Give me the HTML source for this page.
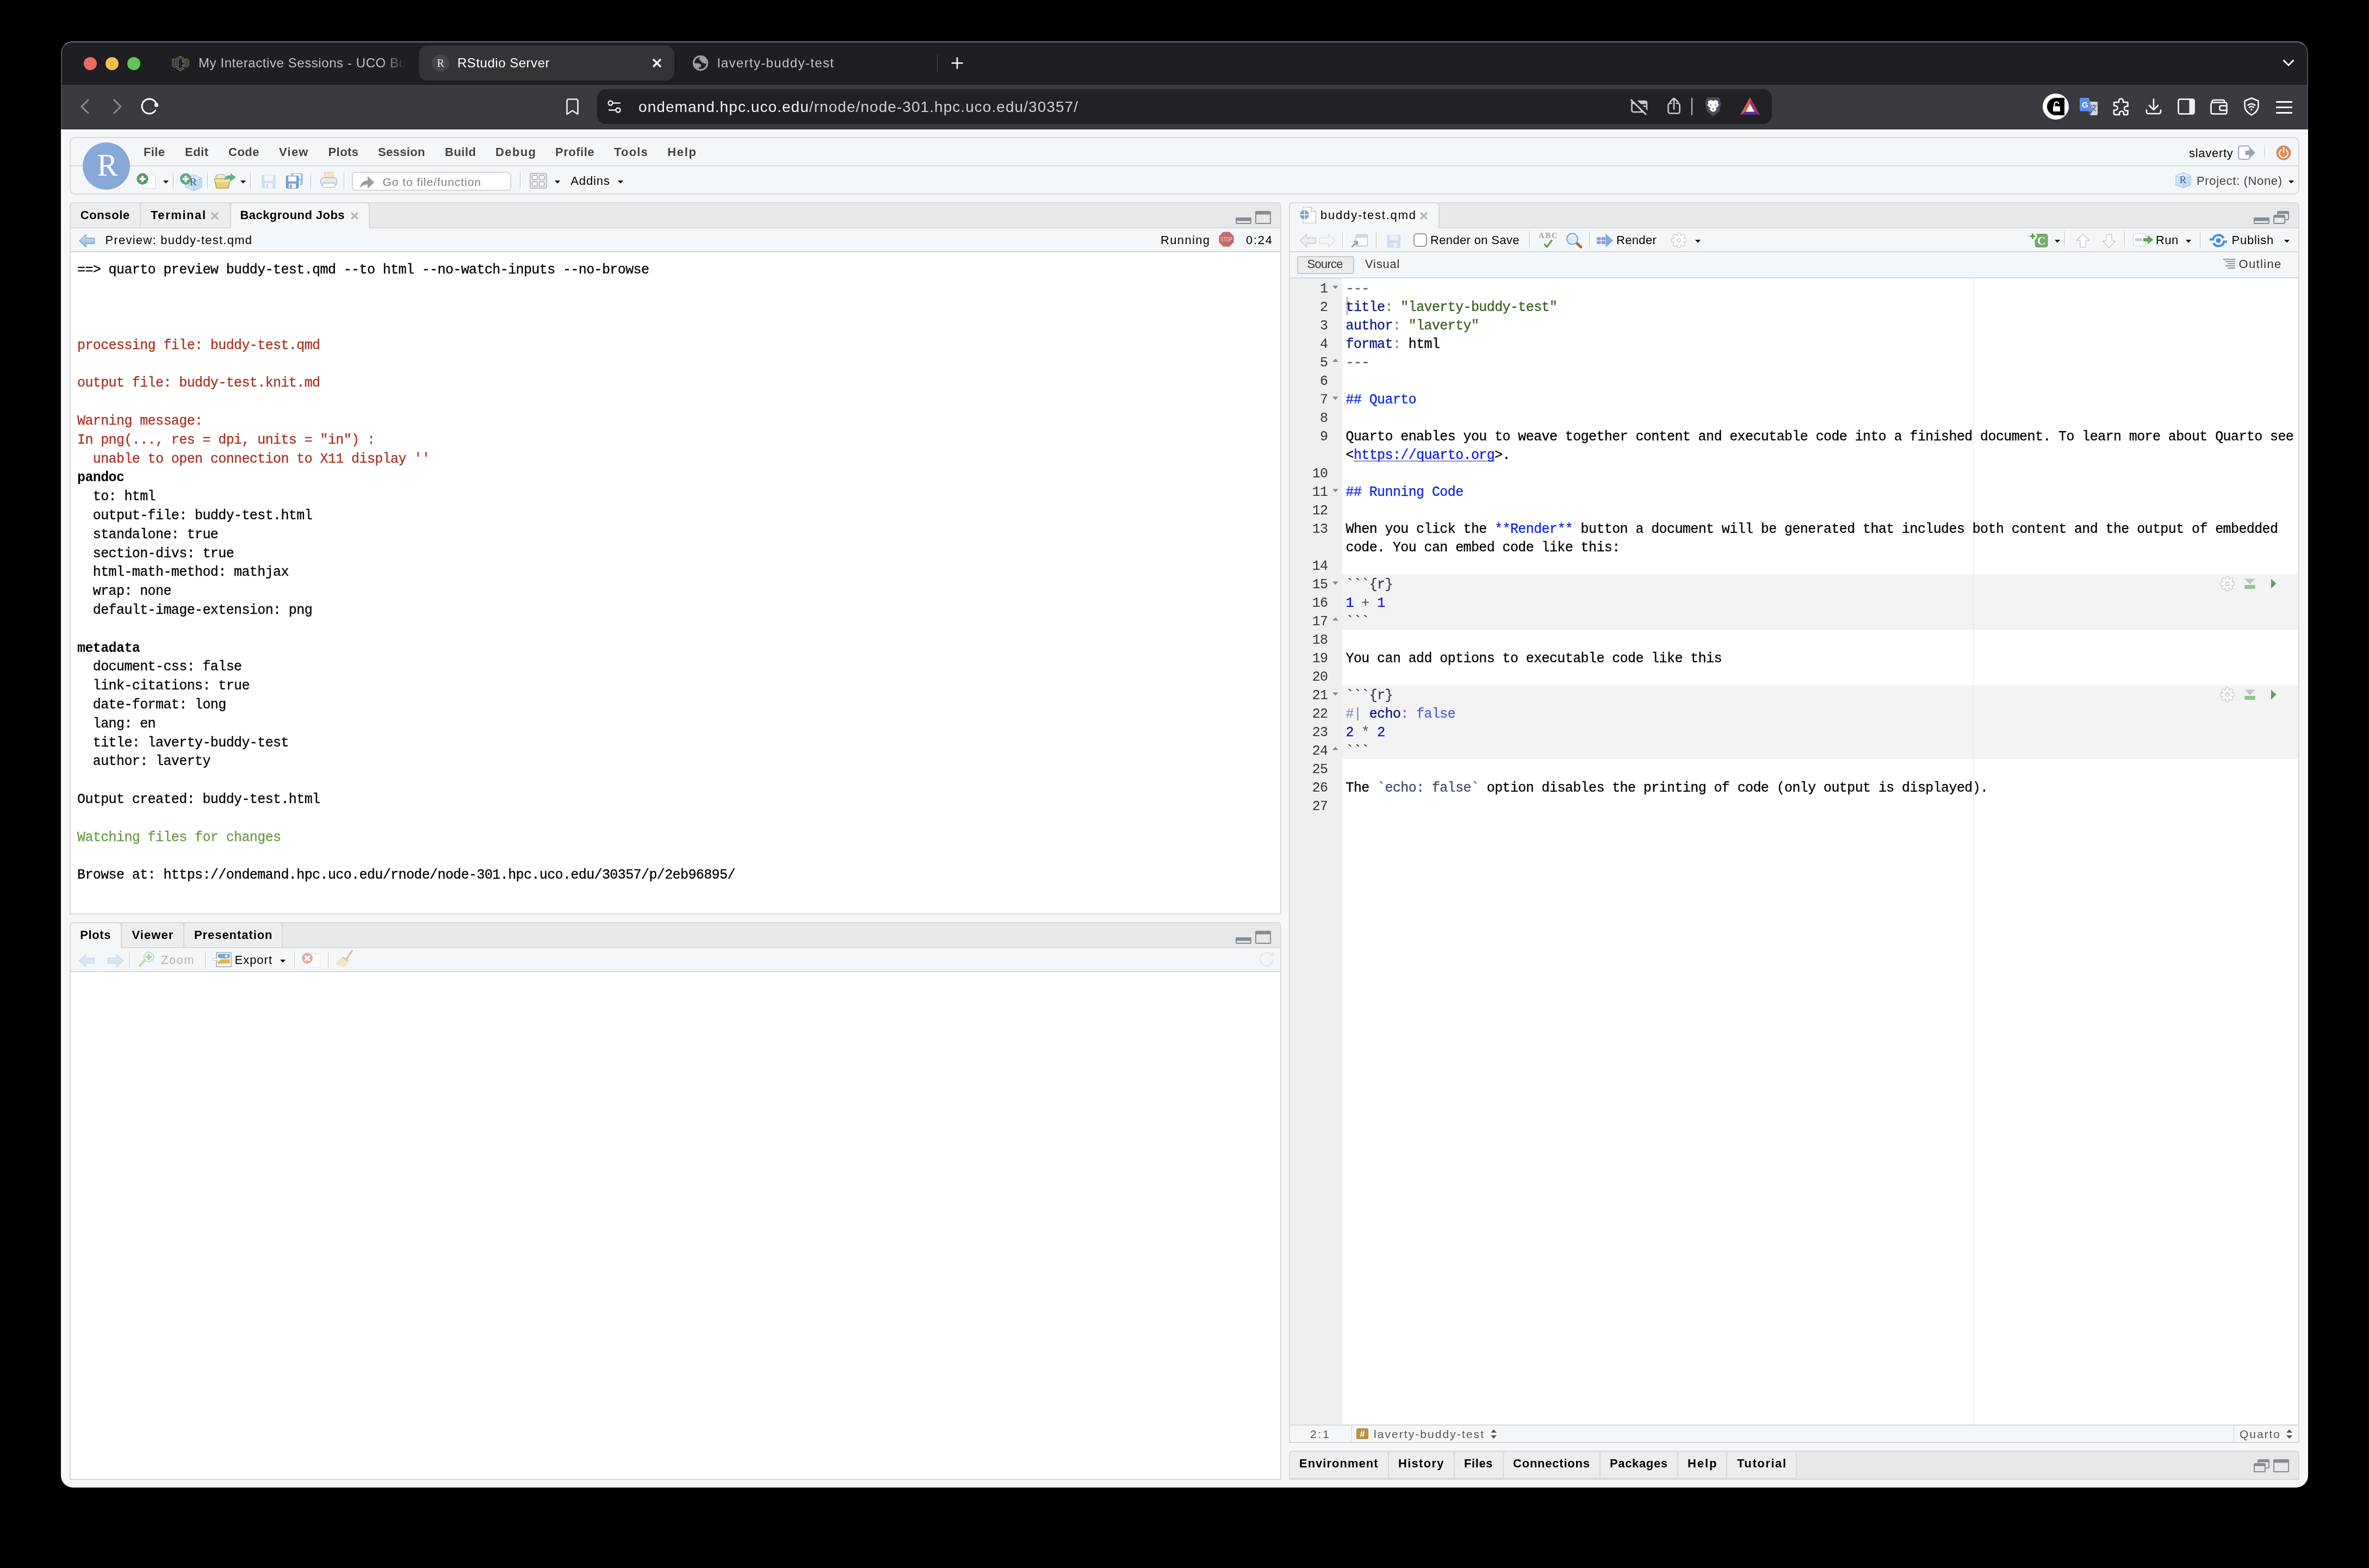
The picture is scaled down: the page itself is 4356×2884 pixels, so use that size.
<!DOCTYPE html>
<html><head><meta charset="utf-8"><title>RStudio Server</title>
<style>
html,body{margin:0;padding:0;background:#000;}
body{width:4356px;height:2884px;position:relative;overflow:hidden;font-family:"Liberation Sans",sans-serif;}
#win{position:absolute;left:0;top:0;width:4356px;height:2884px;will-change:transform;clip-path:inset(76px 112px 148px 112px round 21px 21px 22px 22px);}
#win div,#win span,#win svg{position:absolute;}
#win span{white-space:nowrap;display:block;}
#win span span{position:static;display:inline;}
#edge{position:absolute;left:112px;top:76px;width:4132px;height:162px;box-sizing:border-box;border-radius:21px 21px 0 0;border:2px solid #4b4b50;border-top-color:#6f6f73;border-bottom:none;pointer-events:none;}
</style></head><body>
<div id="win">
<div style="left:112px;top:76px;width:4132px;height:80px;background:#1f1e23"></div>
<div style="left:112px;top:156px;width:4132px;height:82px;background:#3b3a40"></div>
<div style="left:112px;top:237px;width:4132px;height:1px;background:#2a292e"></div>
<div style="left:154px;top:105px;width:24px;height:24px;border-radius:50%;background:#ec6a5e"></div>
<div style="left:194px;top:105px;width:24px;height:24px;border-radius:50%;background:#f4bf4f"></div>
<div style="left:234px;top:105px;width:24px;height:24px;border-radius:50%;background:#61c554"></div>
<svg style="left:316px;top:102px;" width="32" height="30" viewBox="0 0 32 30"><g fill="none" stroke-linejoin="miter" stroke-linecap="square">
      <g stroke="#b9a24d" stroke-width="3.600"><path d="M2.45 7.8V18.6L5.3 20.6 8.15 18.6V7.8"/><path d="M20.65 10.6V6L15.7 2.8 10.75 6V23.5L15.7 26.700 20.65 23.5V19"/><path d="M24.15 9.300 26.85 7.400 29.55 9.300V18.400L26.85 20.200 24.15 18.400z"/></g>
      <g stroke="#0b2259" stroke-width="1.900"><path d="M2.45 7.8V18.6L5.3 20.6 8.15 18.6V7.8"/><path d="M20.65 10.6V6L15.7 2.8 10.75 6V23.5L15.7 26.700 20.65 23.5V19"/><path d="M24.15 9.300 26.85 7.400 29.55 9.300V18.400L26.85 20.200 24.15 18.400z"/></g></g></svg>
<span style="left:365px;top:102px;font-size:24px;line-height:27px;color:#c2c2c6;letter-spacing:0.577px;-webkit-mask-image:linear-gradient(90deg,#000 0,#000 88%,transparent 100%);mask-image:linear-gradient(90deg,#000 0,#000 88%,transparent 100%);">My Interactive Sessions - UCO Bu</span>
<div style="left:770px;top:84px;width:470px;height:64px;background:#343338;border-radius:16px"></div>
<div style="left:794px;top:100px;width:32px;height:32px;background:#47464b;border-radius:50%"></div>
<span style="left:803.5px;top:104.5px;font-size:20px;line-height:22px;color:#f2f2f2;font-family:'Liberation Serif',serif;">R</span>
<span style="left:841px;top:102px;font-size:24px;line-height:27px;color:#fff;letter-spacing:0.519px;">RStudio Server</span>
<svg style="left:1198px;top:106px;" width="20" height="20" viewBox="0 0 20 20"><path d="M3 3 17 17M17 3 3 17" stroke="#fff" stroke-width="3.4" fill="none"/></svg>
<svg style="left:1273px;top:101px;" width="30" height="30" viewBox="0 0 30 30">
      <circle cx="15" cy="15" r="14.200" fill="#9d9fa6"/><circle cx="15" cy="15" r="11" fill="#1f1e23"/>
      <path d="M15 3.800C13 5.500 12.300 7.500 12.800 9.500L15.500 10 16.500 12.500C17 14 18.500 15 20.500 14.500 22 16.500 24.500 16.500 26.200 15A11.200 11.200 0 0 0 15 3.800z" fill="#9d9fa6"/>
      <path d="M3.800 15.200 12.500 15.500C15 16.500 16.500 18 16.200 20L15.500 22 12.200 22.800V26A11.200 11.200 0 0 1 3.800 15.200z" fill="#9d9fa6"/></svg>
<span style="left:1319px;top:102px;font-size:24px;line-height:27px;color:#c2c2c6;letter-spacing:1.368px;">laverty-buddy-test</span>
<div style="left:1722.5px;top:101px;width:1.5px;height:32px;background:#4a4950"></div>
<svg style="left:1748px;top:104px;" width="24" height="24" viewBox="0 0 24 24"><path d="M12 1.500v21M1.500 12h21" stroke="#fff" stroke-width="2.600" fill="none"/></svg>
<svg style="left:4196px;top:107px;" width="24" height="18" viewBox="0 0 24 18"><path d="M2.500 3.500 12 13l9.500-9.500" stroke="#fff" stroke-width="3" fill="none"/></svg>
<svg style="left:145px;top:180px;" width="22" height="32" viewBox="0 0 22 32"><path d="M18 3 5 16l13 13" stroke="#8b8a91" stroke-width="3" fill="none"/></svg>
<svg style="left:205px;top:180px;" width="22" height="32" viewBox="0 0 22 32"><path d="M4 3l13 13L4 29" stroke="#8b8a91" stroke-width="3" fill="none"/></svg>
<svg style="left:258px;top:178px;" width="36" height="36" viewBox="0 0 36 36"><path d="M29.500 13.500A13.500 13.500 0 1 0 27.800 25" stroke="#fff" stroke-width="3" fill="none" stroke-linecap="round"/>
      <circle cx="29.500" cy="15" r="3.700" fill="#fff"/></svg>
<svg style="left:1040px;top:180px;" width="25" height="33" viewBox="0 0 25 33"><path d="M2.500 5.500a3 3 0 0 1 3-3h14a3 3 0 0 1 3 3V30L12.500 23.500 2.500 30z" stroke="#ededf0" stroke-width="2.600" fill="none" stroke-linejoin="round"/></svg>
<div style="left:1098px;top:164px;width:2160px;height:64px;background:#222126;border-radius:16px"></div>
<svg style="left:1116px;top:183px;" width="28" height="26" viewBox="0 0 28 26"><g stroke="#ededf0" stroke-width="2.400" fill="none">
      <circle cx="6.500" cy="6.500" r="4"/><path d="M10.500 6.500H25"/>
      <circle cx="20.500" cy="19.500" r="4"/><path d="M3 19.500h13.500"/></g></svg>
<span style="left:1174px;top:180.5px;font-size:28px;line-height:31px;color:#f2f2f5;letter-spacing:1.057px;">ondemand.hpc.uco.edu<span style="color:#cfcfd4">/rnode/node-301.hpc.uco.edu/30357/</span></span>
<svg style="left:2996px;top:180px;" width="36" height="34" viewBox="0 0 36 34"><defs><mask id="cm"><rect width="36" height="34" fill="#fff"/><path d="M5 0.500 34.500 29.500" stroke="#000" stroke-width="7"/></mask></defs>
      <g mask="url(#cm)"><rect x="4.500" y="6" width="27.500" height="20" rx="3" stroke="#c9c9ce" stroke-width="2.600" fill="none"/>
      <path d="M4.500 9a3 3 0 0 1 3-3h21.500a3 3 0 0 1 3 3v2.500H4.500z" fill="#c9c9ce"/>
      <path d="M22 25V15.500h10" stroke="#c9c9ce" stroke-width="2.600" fill="none"/></g>
      <path d="M2.500 3 31 31" stroke="#c9c9ce" stroke-width="3" stroke-linecap="butt"/></svg>
<svg style="left:3065px;top:178px;" width="26" height="34" viewBox="0 0 26 34"><g stroke="#c9c9ce" stroke-width="2.600" fill="none" stroke-linejoin="round" stroke-linecap="round">
      <path d="M8.500 12H6a3.500 3.500 0 0 0-3.500 3.500v11.500A3.500 3.500 0 0 0 6 30.500h14a3.500 3.500 0 0 0 3.500-3.500V15.500A3.500 3.500 0 0 0 20 12h-2.500"/>
      <path d="M13 22.500V3M5.700 9.500 13 2.500l7.300 7"/></g></svg>
<div style="left:3109.9px;top:180px;width:2.1px;height:32px;background:#c4c4c9"></div>
<svg style="left:3133px;top:177px;" width="34" height="38" viewBox="0 0 34 38"><path d="M17 1.500 10.500 3 7.500 1.500 3.500 6l1 3L2 12.500l3.500 15L17 37l11.500-9.500 3.500-15L29.500 9l1-3-4-4.500-3 1.500z" fill="#4d4c5a"/>
      <path d="M17 8.500l-4.500-1.500-5 2.500 1 3-2 3 2 3.500 3.500 2.500-1.500 3 2.500 2.500L17 29l4-2-.0 0 2.500-2.500-1.500-3 3.500-2.500 2-3.500-2-3 1-3-5-2.500z" fill="#fff"/>
      <path d="M10 14.500l4 1.500-1 2zM24 14.500l-4 1.500 1 2zM15 22.500h4l-2 2.500z" fill="#4d4c5a"/></svg>
<svg style="left:3199px;top:178px;" width="38" height="34" viewBox="0 0 38 34"><path d="M19 1 1 33h36z" fill="#5c2d91"/>
      <path d="M19 1 1 33l18-10.500z" fill="#e2593c"/><path d="M19 1 37 33 19 22.500z" fill="#9e3568"/>
      <path d="M1 33 19 22.500 37 33z" fill="#5a2e93"/><path d="M19 13.500 11 27.500h16z" fill="#fff"/></svg>
<div style="left:3756px;top:172px;width:48px;height:48px;background:#fff;border-radius:50%"></div>
<svg style="left:3764px;top:180px;" width="32" height="32" viewBox="0 0 32 32"><path d="M16 0h16v32H16A16 16 0 0 1 16 0z" fill="#000"/>
      <rect x="11" y="15.500" width="13" height="9.500" rx="1" fill="#fff"/>
      <path d="M13.500 15.500v-3.500a4 4 0 0 1 8-.8" stroke="#fff" stroke-width="2.200" fill="none"/></svg>
<svg style="left:3823px;top:179px;" width="35" height="34" viewBox="0 0 35 34"><path d="M13 8h19a2 2 0 0 1 2 2v21a2 2 0 0 1-2 2H20z" fill="#d4d6db"/>
      <path d="M3 1h15l6.500 24.500H3a2 2 0 0 1-2-2V3a2 2 0 0 1 2-2z" fill="#5b8def"/>
      <path d="M17 25.500h7.500L20 33z" fill="#3b63c4"/>
      <text x="5" y="19" font-family="Liberation Sans, sans-serif" font-weight="bold" font-size="15" fill="#fff">G</text>
      <g stroke="#5f6b7a" stroke-width="1.700" fill="none"><path d="M22 15.500h10M27 13v2.500M30 15.500c-1 4-4 7.500-7.500 9.500M24 18.500c1.500 3 4 5.500 7 7"/></g></svg>
<svg style="left:3883px;top:179px;" width="34" height="34" viewBox="0 0 34 34"><path d="M13 6.500a4 4 0 0 1 8 0V9h6.500a2 2 0 0 1 2 2v5.500H27a4 4 0 0 0 0 8h2.500V30a2 2 0 0 1-2 2H22v-2.500a4 4 0 0 0-8 0V32H6a2 2 0 0 1-2-2v-6.500h2.500a4 4 0 0 0 0-8H4V11a2 2 0 0 1 2-2h7z" stroke="#fff" stroke-width="2.600" fill="none" stroke-linejoin="round"/></svg>
<svg style="left:3945px;top:180px;" width="30" height="32" viewBox="0 0 30 32"><g stroke="#fff" stroke-width="2.600" fill="none" stroke-linecap="round" stroke-linejoin="round">
      <path d="M15 2.500v19M7 14l8 8 8-8"/><path d="M2 22.500V26a3 3 0 0 0 3 3h20a3 3 0 0 0 3-3v-3.500"/></g></svg>
<svg style="left:4004px;top:181px;" width="32" height="30" viewBox="0 0 32 30"><rect x="1.500" y="1.500" width="29" height="27" rx="3" stroke="#fff" stroke-width="2.600" fill="none"/>
      <path d="M21.500 1.500h6a3 3 0 0 1 3 3v21a3 3 0 0 1-3 3h-6z" fill="#f0f0f3"/></svg>
<svg style="left:4064px;top:182px;" width="32" height="29" viewBox="0 0 32 29"><g stroke="#fff" stroke-width="2.600" fill="none" stroke-linejoin="round">
      <path d="M3.500 7.500V5a3 3 0 0 1 3-3h17a3 3 0 0 1 3 3v2.500"/>
      <rect x="1.500" y="6.500" width="29" height="21" rx="3"/>
      <path d="M30.500 12.500H20a2.500 2.500 0 0 0-2.500 2.500v3.500A2.500 2.500 0 0 0 20 21h10.500"/></g></svg>
<svg style="left:4125px;top:179px;" width="30" height="34" viewBox="0 0 30 34"><g stroke="#fff" stroke-width="2.500" fill="none" stroke-linejoin="round" stroke-linecap="round">
      <path d="M15 1.500 27.500 6.500v9c0 8-5.500 13.500-12.500 17C8 29 2.500 23.500 2.500 15.500v-9z"/>
      <path d="M8.500 14.500a9.500 9.500 0 0 1 13 0M11 18.500a5.800 5.800 0 0 1 8 0"/></g>
      <circle cx="15" cy="22.500" r="1.800" fill="#fff"/></svg>
<div style="left:4185px;top:186px;width:30px;height:2.6px;background:#fff;border-radius:1px"></div>
<div style="left:4185px;top:196px;width:30px;height:2.6px;background:#fff;border-radius:1px"></div>
<div style="left:4185px;top:206px;width:30px;height:2.6px;background:#fff;border-radius:1px"></div>
<div style="left:112px;top:238px;width:4132px;height:2498px;background:#f6f7f9"></div>
<div style="left:128px;top:252px;width:4100px;height:106px;box-sizing:border-box;border:2px solid #d7d9dc;border-radius:10px;background:#f4f7f9"></div>
<div style="left:130px;top:304px;width:4096px;height:2px;background:#d7d9dc"></div>
<div style="left:152px;top:261.5px;width:87px;height:87px;border-radius:50%;background:#88a8d7"></div>
<span style="left:178.5px;top:271.5px;font-size:57px;line-height:63px;color:#fff;font-family:'Liberation Serif',serif;">R</span>
<span style="left:264px;top:267px;font-size:22px;line-height:25px;color:#434343;font-weight:bold;letter-spacing:0.365px;">File</span>
<span style="left:340px;top:267px;font-size:22px;line-height:25px;color:#434343;font-weight:bold;letter-spacing:0.479px;">Edit</span>
<span style="left:420px;top:267px;font-size:22px;line-height:25px;color:#434343;font-weight:bold;letter-spacing:0.500px;">Code</span>
<span style="left:513px;top:267px;font-size:22px;line-height:25px;color:#434343;font-weight:bold;letter-spacing:1.250px;">View</span>
<span style="left:603.5px;top:267px;font-size:22px;line-height:25px;color:#434343;font-weight:bold;letter-spacing:0.426px;">Plots</span>
<span style="left:695px;top:267px;font-size:22px;line-height:25px;color:#434343;font-weight:bold;letter-spacing:0.354px;">Session</span>
<span style="left:818px;top:267px;font-size:22px;line-height:25px;color:#434343;font-weight:bold;letter-spacing:0.500px;">Build</span>
<span style="left:911px;top:267px;font-size:22px;line-height:25px;color:#434343;font-weight:bold;letter-spacing:1.387px;">Debug</span>
<span style="left:1021px;top:267px;font-size:22px;line-height:25px;color:#434343;font-weight:bold;letter-spacing:0.505px;">Profile</span>
<span style="left:1129px;top:267px;font-size:22px;line-height:25px;color:#434343;font-weight:bold;letter-spacing:1.192px;">Tools</span>
<span style="left:1227.25px;top:267px;font-size:22px;line-height:25px;color:#434343;font-weight:bold;letter-spacing:1.687px;">Help</span>
<span style="left:4025px;top:268.75px;font-size:22px;line-height:25px;color:#000;letter-spacing:0.715px;">slaverty</span>
<svg style="left:4114px;top:266px;" width="36" height="30" viewBox="0 0 36 30"><rect x="2" y="2.500" width="21" height="24.500" rx="4.500" fill="#fff" stroke="#9eaac0" stroke-width="2.200"/>
      <path d="M14.500 11h9V6l9.500 9-9.500 9v-5h-9z" fill="#94a3b8"/></svg>
<div style="left:4163.85px;top:263px;width:3.8px;height:33px;background:linear-gradient(90deg,#c3c5c8 0 37%,transparent 37% 58%,#fff 58% 100%);-webkit-mask-image:linear-gradient(180deg,transparent 0,#000 22%,#000 78%,transparent 100%);mask-image:linear-gradient(180deg,transparent 0,#000 22%,#000 78%,transparent 100%)"></div>
<svg style="left:4185px;top:267px;" width="28" height="28" viewBox="0 0 28 28"><circle cx="14" cy="14" r="13" fill="#d98e63" stroke="#c77a50" stroke-width="1"/>
      <path d="M9.500 8.500a8 8 0 1 0 9 0" stroke="#fff" stroke-width="2" fill="none" stroke-linecap="round"/>
      <path d="M14 4.500v9" stroke="#fff" stroke-width="2" stroke-linecap="round"/></svg>
<svg style="left:4000px;top:317px;" width="29" height="29" viewBox="0 0 29 29"><polygon points="14.5,0.0 29.0,6.5 14.5,13.0 0.0,6.5" fill="#dcedf8" stroke="#93c4de" stroke-width="1"/><polygon points="0.0,6.5 14.5,13.0 14.5,29.0 0.0,22.5" fill="#cfe5f4" stroke="#93c4de" stroke-width="1"/><polygon points="29.0,6.5 14.5,13.0 14.5,29.0 29.0,22.5" fill="#c3def1" stroke="#93c4de" stroke-width="1"/><path d="M14.5 13.0V29.0M0 22.5L14.5 16.0L29.0 22.5M14.5 16.0V0" stroke="#a5cfe6" stroke-width=".8" fill="none"/><text x="7.5" y="19.5" font-family="Liberation Serif, serif" font-size="19.0" fill="#3f5ba6">R</text></svg>
<span style="left:4039px;top:320px;font-size:22px;line-height:25px;color:#444;letter-spacing:0.646px;">Project: (None)</span>
<svg style="left:4208px;top:332px;" width="10" height="5.5" viewBox="0 0 10 5.5"><path d="M0 0h10L5.0 5.5z" fill="#111"/></svg>
<svg style="left:250px;top:317px;" width="38" height="32" viewBox="0 0 38 32"><rect x="12.500" y="4.500" width="23" height="25" fill="#fff" stroke="#d9dde0" stroke-width="1"/><circle cx="12" cy="12" r="10" fill="#589c67" stroke="#4a8c59" stroke-width="1"/><path d="M12 6.5v11M6.5 12h11" stroke="#fff" stroke-width="3.800"/></svg>
<svg style="left:300px;top:332px;" width="10" height="5.5" viewBox="0 0 10 5.5"><path d="M0 0h10L5.0 5.5z" fill="#111"/></svg>
<div style="left:318.1px;top:314px;width:3.8px;height:37px;background:linear-gradient(90deg,#c3c5c8 0 37%,transparent 37% 58%,#fff 58% 100%);-webkit-mask-image:linear-gradient(180deg,transparent 0,#000 22%,#000 78%,transparent 100%);mask-image:linear-gradient(180deg,transparent 0,#000 22%,#000 78%,transparent 100%)"></div>
<svg style="left:329px;top:317px;" width="44" height="36" viewBox="0 0 44 36"><g transform="translate(12,4)"><polygon points="15.0,0.0 30.0,6.7 15.0,13.4 0.0,6.7" fill="#dcedf8" stroke="#93c4de" stroke-width="1"/><polygon points="0.0,6.7 15.0,13.4 15.0,30.0 0.0,23.3" fill="#cfe5f4" stroke="#93c4de" stroke-width="1"/><polygon points="30.0,6.7 15.0,13.4 15.0,30.0 30.0,23.3" fill="#c3def1" stroke="#93c4de" stroke-width="1"/><path d="M15.0 13.4V30.0M0 23.3L15.0 16.6L30.0 23.3M15.0 16.6V0" stroke="#a5cfe6" stroke-width=".8" fill="none"/><text x="7.8" y="20.2" font-family="Liberation Serif, serif" font-size="19.7" fill="#3f5ba6">R</text></g><circle cx="12.5" cy="12" r="10" fill="#66aa86" stroke="#5a9e7a" stroke-width="1"/><path d="M12.5 6.5v11M7 12h11" stroke="#fff" stroke-width="3.800"/></svg>
<div style="left:380.6px;top:314px;width:3.8px;height:37px;background:linear-gradient(90deg,#c3c5c8 0 37%,transparent 37% 58%,#fff 58% 100%);-webkit-mask-image:linear-gradient(180deg,transparent 0,#000 22%,#000 78%,transparent 100%);mask-image:linear-gradient(180deg,transparent 0,#000 22%,#000 78%,transparent 100%)"></div>
<svg style="left:393px;top:318px;" width="44" height="30" viewBox="0 0 44 30"><path d="M4 6l3-3.500h11l3 3.500h12v6H4z" fill="#ece8d6" stroke="#bdb48f" stroke-width="1.200"/>
      <path d="M1.500 11h29l-3.500 17H5z" fill="#e8d282" stroke="#b89a3e" stroke-width="1.400" stroke-linejoin="round"/>
      <path d="M2 11.500h28l-1 5H3z" fill="#f4e8b4" opacity=".8"/>
      <path d="M19 13c1-6 6-8.500 12-8.500V.5l10 7.500-10 7.500V11c-5 0-9 .5-12 2z" fill="#64b08a"/></svg>
<svg style="left:442px;top:332px;" width="10" height="5.5" viewBox="0 0 10 5.5"><path d="M0 0h10L5.0 5.5z" fill="#111"/></svg>
<div style="left:460.1px;top:314px;width:3.8px;height:37px;background:linear-gradient(90deg,#c3c5c8 0 37%,transparent 37% 58%,#fff 58% 100%);-webkit-mask-image:linear-gradient(180deg,transparent 0,#000 22%,#000 78%,transparent 100%);mask-image:linear-gradient(180deg,transparent 0,#000 22%,#000 78%,transparent 100%)"></div>
<svg style="left:480.5px;top:321px;" width="26" height="26" viewBox="0 0 26 26"><g transform="translate(0,0) scale(1.0)"><path d="M1 3a2 2 0 0 1 2-2h20a2 2 0 0 1 2 2v20a2 2 0 0 1-2 2H3a2 2 0 0 1-2-2z" fill="#d3dfef" stroke="#c9d7ea" stroke-width="1.200"/><rect x="5" y="1.500" width="16" height="10" fill="#f3f7fb"/><rect x="6" y="16" width="14" height="9" fill="#f3f7fb"/><rect x="8" y="18" width="4" height="7" fill="#d3dfef"/></g></svg>
<svg style="left:525px;top:318px;" width="34" height="30" viewBox="0 0 34 30"><g transform="translate(10,0.5) scale(0.8461538461538461)"><path d="M1 3a2 2 0 0 1 2-2h20a2 2 0 0 1 2 2v20a2 2 0 0 1-2 2H3a2 2 0 0 1-2-2z" fill="#a3cbec" stroke="#7fb0dc" stroke-width="1.200"/><rect x="5" y="1.500" width="16" height="10" fill="#f4f9fd"/><rect x="6" y="16" width="14" height="9" fill="#f4f9fd"/><rect x="8" y="18" width="4" height="7" fill="#a3cbec"/></g><g transform="translate(0.5,5) scale(0.9230769230769231)"><path d="M1 3a2 2 0 0 1 2-2h20a2 2 0 0 1 2 2v20a2 2 0 0 1-2 2H3a2 2 0 0 1-2-2z" fill="#7b9fd4" stroke="#5f86c4" stroke-width="1.200"/><rect x="5" y="1.500" width="16" height="10" fill="#fbfcfe"/><rect x="6" y="16" width="14" height="9" fill="#fbfcfe"/><rect x="8" y="18" width="4" height="7" fill="#7b9fd4"/></g></svg>
<div style="left:570.6px;top:314px;width:3.8px;height:37px;background:linear-gradient(90deg,#c3c5c8 0 37%,transparent 37% 58%,#fff 58% 100%);-webkit-mask-image:linear-gradient(180deg,transparent 0,#000 22%,#000 78%,transparent 100%);mask-image:linear-gradient(180deg,transparent 0,#000 22%,#000 78%,transparent 100%)"></div>
<svg style="left:588px;top:316px;" width="33" height="31" viewBox="0 0 33 31"><rect x="8.500" y="1" width="16" height="14" fill="#f0e4c2" stroke="#dccfa6" stroke-width="1"/>
      <rect x="1.500" y="11" width="30" height="14" rx="5" fill="#e9ecf0" stroke="#aeb6c2" stroke-width="1.300"/>
      <rect x="5" y="21" width="23" height="7.500" rx="2" fill="#f8f9fa" stroke="#aeb6c2" stroke-width="1.200"/>
      <path d="M3 19.500h27" stroke="#c6ccd5" stroke-width="1.200"/></svg>
<div style="left:632.1px;top:314px;width:3.8px;height:37px;background:linear-gradient(90deg,#c3c5c8 0 37%,transparent 37% 58%,#fff 58% 100%);-webkit-mask-image:linear-gradient(180deg,transparent 0,#000 22%,#000 78%,transparent 100%);mask-image:linear-gradient(180deg,transparent 0,#000 22%,#000 78%,transparent 100%)"></div>
<div style="left:646.5px;top:315.5px;width:293px;height:35px;box-sizing:border-box;background:#fff;border:2px solid #d3d7da;border-radius:7px"></div>
<svg style="left:661px;top:321px;" width="28" height="26" viewBox="0 0 28 26"><path d="M1 25c1-9 6-14 14-14V3l12 11.500L15 26v-7.500C9 18.500 4 20.500 1 25z" fill="#9b9ba3"/></svg>
<span style="left:703.5px;top:323px;font-size:21px;line-height:23px;color:#7d7d7d;letter-spacing:0.948px;">Go to file/function</span>
<div style="left:956.1px;top:314px;width:3.8px;height:37px;background:linear-gradient(90deg,#c3c5c8 0 37%,transparent 37% 58%,#fff 58% 100%);-webkit-mask-image:linear-gradient(180deg,transparent 0,#000 22%,#000 78%,transparent 100%);mask-image:linear-gradient(180deg,transparent 0,#000 22%,#000 78%,transparent 100%)"></div>
<svg style="left:974px;top:318px;" width="32" height="29" viewBox="0 0 32 29"><rect x="1" y="1" width="30" height="27" rx="3" fill="#eceef2" stroke="#a9adb8" stroke-width="1.400"/>
      <g fill="#f9fafb" stroke="#a9adb8" stroke-width="1.400"><rect x="4.500" y="4.500" width="9.500" height="8" rx="1.500"/><rect x="17.500" y="4.500" width="9.500" height="8" rx="1.500"/>
      <rect x="4.500" y="16.500" width="9.500" height="8" rx="1.500"/><rect x="17.500" y="16.500" width="9.500" height="8" rx="1.500"/></g></svg>
<svg style="left:1020px;top:332px;" width="10" height="5.5" viewBox="0 0 10 5.5"><path d="M0 0h10L5.0 5.5z" fill="#111"/></svg>
<span style="left:1049.25px;top:319.5px;font-size:22px;line-height:25px;color:#000;letter-spacing:0.894px;">Addins</span>
<svg style="left:1136px;top:332px;" width="10" height="5.5" viewBox="0 0 10 5.5"><path d="M0 0h10L5.0 5.5z" fill="#111"/></svg>
<div style="left:128px;top:372px;width:2228px;height:1310px;box-sizing:border-box;border:2px solid #d7d9dc;border-radius:7px 7px 0 0;background:#fff;overflow:hidden"></div>
<div style="left:130px;top:374px;width:2224px;height:44px;background:#e7e8ea;border-radius:5px 5px 0 0"></div>
<div style="left:130px;top:418px;width:2224px;height:2px;background:#d7d9dc"></div>
<div style="left:128px;top:372px;width:131px;height:48px;box-sizing:border-box;background:#ecedef;border:2px solid #d7d9dc;border-radius:7px 7px 0 0"></div>
<div style="left:257px;top:372px;width:168px;height:48px;box-sizing:border-box;background:#ecedef;border:2px solid #d7d9dc;border-radius:7px 7px 0 0"></div>
<div style="left:423px;top:372px;width:257px;height:49px;box-sizing:border-box;background:#f4f7f9;border:2px solid #d7d9dc;border-bottom:none;border-radius:7px 7px 0 0"></div>
<span style="left:147.75px;top:383px;font-size:22px;line-height:25px;color:#000;font-weight:bold;letter-spacing:0.617px;">Console</span>
<span style="left:277px;top:383px;font-size:22px;line-height:25px;color:#000;font-weight:bold;letter-spacing:1.562px;">Terminal</span>
<svg style="left:388.0px;top:389.5px;" width="14" height="14" viewBox="0 0 14 14"><path d="M1 1 13 13M13 1 1 13" stroke="#b3b3b3" stroke-width="3.200" fill="none"/></svg>
<span style="left:441.5px;top:383px;font-size:22px;line-height:25px;color:#000;font-weight:bold;letter-spacing:0.442px;">Background Jobs</span>
<svg style="left:644.5px;top:389.5px;" width="14" height="14" viewBox="0 0 14 14"><path d="M1 1 13 13M13 1 1 13" stroke="#b3b3b3" stroke-width="3.200" fill="none"/></svg>
<svg style="left:2272px;top:400px;" width="29" height="12" viewBox="0 0 29 12"><rect x="1" y="1" width="27" height="10" rx="1" fill="none" stroke="#858d93" stroke-width="2"/><rect x="1" y="1" width="27" height="5.500" rx="1" fill="#858d93"/></svg>
<svg style="left:2308px;top:388px;" width="29" height="24" viewBox="0 0 29 24"><rect x="1" y="1" width="27" height="22" rx="1" fill="none" stroke="#858d93" stroke-width="2"/><rect x="1" y="1" width="27" height="5.500" rx="1" fill="#858d93"/></svg>
<div style="left:130px;top:420px;width:2224px;height:42px;background:#f4f7f9"></div>
<div style="left:130px;top:462px;width:2224px;height:2px;background:#d7d9dc"></div>
<svg style="left:145px;top:430px;" width="30" height="26" viewBox="0 0 30 26"><defs><linearGradient id="ba" x1="0" y1="0" x2="0" y2="1"><stop offset="0" stop-color="#cfe2f3"/><stop offset="1" stop-color="#8fb6dc"/></linearGradient></defs>
      <path d="M1 13 13 1.500v6.500h15.500v10H13v6.500z" fill="url(#ba)" stroke="#7aa3cc" stroke-width="1.300" stroke-linejoin="round"/></svg>
<span style="left:193.5px;top:428.75px;font-size:22px;line-height:25px;color:#000;letter-spacing:1.245px;">Preview: buddy-test.qmd</span>
<span style="left:2134px;top:428.75px;font-size:22px;line-height:25px;color:#000;letter-spacing:1.341px;">Running</span>
<svg style="left:2241px;top:426px;" width="28" height="28" viewBox="0 0 28 28"><path d="M8.500 1h11l7.500 7.500v11L19.500 27h-11L1 19.500v-11z" fill="#c8676a" stroke="#b45558" stroke-width="1"/>
      <text x="14" y="18" text-anchor="middle" font-family="Liberation Sans, sans-serif" font-size="11" fill="#f3d6d6" textLength="22" lengthAdjust="spacingAndGlyphs">STOP</text></svg>
<span style="left:2291px;top:428.75px;font-size:22px;line-height:25px;color:#000;letter-spacing:1.724px;">0:24</span>
<span style="left:142px;top:481.5px;font-size:25px;line-height:29px;color:#000;font-family:'Liberation Mono',monospace;white-space:pre;letter-spacing:-.6px;-webkit-text-stroke:.3px;">==&gt; quarto preview buddy-test.qmd --to html --no-watch-inputs --no-browse</span>
<span style="left:142px;top:620.7px;font-size:25px;line-height:29px;color:#aa3223;font-family:'Liberation Mono',monospace;white-space:pre;letter-spacing:-.6px;-webkit-text-stroke:.3px;">processing file: buddy-test.qmd</span>
<span style="left:142px;top:690.3px;font-size:25px;line-height:29px;color:#aa3223;font-family:'Liberation Mono',monospace;white-space:pre;letter-spacing:-.6px;-webkit-text-stroke:.3px;">output file: buddy-test.knit.md</span>
<span style="left:142px;top:759.9px;font-size:25px;line-height:29px;color:#aa3223;font-family:'Liberation Mono',monospace;white-space:pre;letter-spacing:-.6px;-webkit-text-stroke:.3px;">Warning message:</span>
<span style="left:142px;top:794.7px;font-size:25px;line-height:29px;color:#aa3223;font-family:'Liberation Mono',monospace;white-space:pre;letter-spacing:-.6px;-webkit-text-stroke:.3px;">In png(..., res = dpi, units = &quot;in&quot;) :</span>
<span style="left:142px;top:829.5px;font-size:25px;line-height:29px;color:#aa3223;font-family:'Liberation Mono',monospace;white-space:pre;letter-spacing:-.6px;-webkit-text-stroke:.3px;">  unable to open connection to X11 display &#x27;&#x27;</span>
<span style="left:142px;top:864.3px;font-size:25px;line-height:29px;color:#000;font-weight:bold;font-family:'Liberation Mono',monospace;white-space:pre;letter-spacing:-.6px;">pandoc</span>
<span style="left:142px;top:899.1px;font-size:25px;line-height:29px;color:#000;font-family:'Liberation Mono',monospace;white-space:pre;letter-spacing:-.6px;-webkit-text-stroke:.3px;">  to: html</span>
<span style="left:142px;top:933.9px;font-size:25px;line-height:29px;color:#000;font-family:'Liberation Mono',monospace;white-space:pre;letter-spacing:-.6px;-webkit-text-stroke:.3px;">  output-file: buddy-test.html</span>
<span style="left:142px;top:968.7px;font-size:25px;line-height:29px;color:#000;font-family:'Liberation Mono',monospace;white-space:pre;letter-spacing:-.6px;-webkit-text-stroke:.3px;">  standalone: true</span>
<span style="left:142px;top:1003.5px;font-size:25px;line-height:29px;color:#000;font-family:'Liberation Mono',monospace;white-space:pre;letter-spacing:-.6px;-webkit-text-stroke:.3px;">  section-divs: true</span>
<span style="left:142px;top:1038.3px;font-size:25px;line-height:29px;color:#000;font-family:'Liberation Mono',monospace;white-space:pre;letter-spacing:-.6px;-webkit-text-stroke:.3px;">  html-math-method: mathjax</span>
<span style="left:142px;top:1073.1px;font-size:25px;line-height:29px;color:#000;font-family:'Liberation Mono',monospace;white-space:pre;letter-spacing:-.6px;-webkit-text-stroke:.3px;">  wrap: none</span>
<span style="left:142px;top:1107.9px;font-size:25px;line-height:29px;color:#000;font-family:'Liberation Mono',monospace;white-space:pre;letter-spacing:-.6px;-webkit-text-stroke:.3px;">  default-image-extension: png</span>
<span style="left:142px;top:1177.5px;font-size:25px;line-height:29px;color:#000;font-weight:bold;font-family:'Liberation Mono',monospace;white-space:pre;letter-spacing:-.6px;">metadata</span>
<span style="left:142px;top:1212.3px;font-size:25px;line-height:29px;color:#000;font-family:'Liberation Mono',monospace;white-space:pre;letter-spacing:-.6px;-webkit-text-stroke:.3px;">  document-css: false</span>
<span style="left:142px;top:1247.1px;font-size:25px;line-height:29px;color:#000;font-family:'Liberation Mono',monospace;white-space:pre;letter-spacing:-.6px;-webkit-text-stroke:.3px;">  link-citations: true</span>
<span style="left:142px;top:1281.9px;font-size:25px;line-height:29px;color:#000;font-family:'Liberation Mono',monospace;white-space:pre;letter-spacing:-.6px;-webkit-text-stroke:.3px;">  date-format: long</span>
<span style="left:142px;top:1316.7px;font-size:25px;line-height:29px;color:#000;font-family:'Liberation Mono',monospace;white-space:pre;letter-spacing:-.6px;-webkit-text-stroke:.3px;">  lang: en</span>
<span style="left:142px;top:1351.5px;font-size:25px;line-height:29px;color:#000;font-family:'Liberation Mono',monospace;white-space:pre;letter-spacing:-.6px;-webkit-text-stroke:.3px;">  title: laverty-buddy-test</span>
<span style="left:142px;top:1386.3px;font-size:25px;line-height:29px;color:#000;font-family:'Liberation Mono',monospace;white-space:pre;letter-spacing:-.6px;-webkit-text-stroke:.3px;">  author: laverty</span>
<span style="left:142px;top:1455.9px;font-size:25px;line-height:29px;color:#000;font-family:'Liberation Mono',monospace;white-space:pre;letter-spacing:-.6px;-webkit-text-stroke:.3px;">Output created: buddy-test.html</span>
<span style="left:142px;top:1525.5px;font-size:25px;line-height:29px;color:#6a9b45;font-family:'Liberation Mono',monospace;white-space:pre;letter-spacing:-.6px;-webkit-text-stroke:.3px;">Watching files for changes</span>
<span style="left:142px;top:1595.1px;font-size:25px;line-height:29px;color:#000;font-family:'Liberation Mono',monospace;white-space:pre;letter-spacing:-.6px;-webkit-text-stroke:.3px;">Browse at: https://ondemand.hpc.uco.edu/rnode/node-301.hpc.uco.edu/30357/p/2eb96895/</span>
<div style="left:128px;top:1696px;width:2228px;height:1026px;box-sizing:border-box;border:2px solid #d7d9dc;border-radius:7px 7px 0 0;background:#fff;overflow:hidden"></div>
<div style="left:130px;top:1698px;width:2224px;height:44px;background:#e7e8ea;border-radius:5px 5px 0 0"></div>
<div style="left:130px;top:1742px;width:2224px;height:2px;background:#d7d9dc"></div>
<div style="left:128px;top:1696px;width:96px;height:49px;box-sizing:border-box;background:#f4f7f9;border:2px solid #d7d9dc;border-bottom:none;border-radius:7px 7px 0 0"></div>
<div style="left:222px;top:1696px;width:117px;height:48px;box-sizing:border-box;background:#ecedef;border:2px solid #d7d9dc;border-radius:7px 7px 0 0"></div>
<div style="left:337px;top:1696px;width:183px;height:48px;box-sizing:border-box;background:#ecedef;border:2px solid #d7d9dc;border-radius:7px 7px 0 0"></div>
<span style="left:147.25px;top:1707px;font-size:22px;line-height:25px;color:#000;font-weight:bold;letter-spacing:0.613px;">Plots</span>
<span style="left:242.5px;top:1707px;font-size:22px;line-height:25px;color:#000;font-weight:bold;letter-spacing:1.041px;">Viewer</span>
<span style="left:357px;top:1707px;font-size:22px;line-height:25px;color:#000;font-weight:bold;letter-spacing:0.930px;">Presentation</span>
<svg style="left:2272px;top:1724px;" width="29" height="12" viewBox="0 0 29 12"><rect x="1" y="1" width="27" height="10" rx="1" fill="none" stroke="#858d93" stroke-width="2"/><rect x="1" y="1" width="27" height="5.500" rx="1" fill="#858d93"/></svg>
<svg style="left:2308px;top:1712px;" width="29" height="24" viewBox="0 0 29 24"><rect x="1" y="1" width="27" height="22" rx="1" fill="none" stroke="#858d93" stroke-width="2"/><rect x="1" y="1" width="27" height="5.500" rx="1" fill="#858d93"/></svg>
<div style="left:130px;top:1744px;width:2224px;height:42px;background:#f4f7f9"></div>
<div style="left:130px;top:1786px;width:2224px;height:2px;background:#d7d9dc"></div>
<svg style="left:144px;top:1754px;" width="32" height="26" viewBox="0 0 32 26"><path d="M1.500 13 13.500 1.500v6.500h16v10h-16v6.500z" fill="#d6e6f2" stroke="#c3d9ea" stroke-width="1.200" stroke-linejoin="round"/></svg>
<svg style="left:196px;top:1754px;" width="32" height="26" viewBox="0 0 32 26"><path d="M30.500 13 18.500 1.500v6.500h-16v10h16v6.500z" fill="#d6e6f2" stroke="#c3d9ea" stroke-width="1.200" stroke-linejoin="round"/></svg>
<div style="left:238.1px;top:1747px;width:3.8px;height:37px;background:linear-gradient(90deg,#c3c5c8 0 37%,transparent 37% 58%,#fff 58% 100%);-webkit-mask-image:linear-gradient(180deg,transparent 0,#000 22%,#000 78%,transparent 100%);mask-image:linear-gradient(180deg,transparent 0,#000 22%,#000 78%,transparent 100%)"></div>
<svg style="left:255px;top:1749px;" width="30" height="30" viewBox="0 0 30 30"><path d="M2 27 12 17" stroke="#dccbb4" stroke-width="4.500" stroke-linecap="round"/>
      <circle cx="18.500" cy="11" r="9" fill="#eef6f1" stroke="#c9d6d2" stroke-width="2"/>
      <path d="M18.500 5.500v11M13 11h11" stroke="#a9d3b3" stroke-width="3.400"/></svg>
<span style="left:296px;top:1752.5px;font-size:22px;line-height:25px;color:#b4b4b4;letter-spacing:1.417px;">Zoom</span>
<div style="left:376.6px;top:1747px;width:3.8px;height:37px;background:linear-gradient(90deg,#c3c5c8 0 37%,transparent 37% 58%,#fff 58% 100%);-webkit-mask-image:linear-gradient(180deg,transparent 0,#000 22%,#000 78%,transparent 100%);mask-image:linear-gradient(180deg,transparent 0,#000 22%,#000 78%,transparent 100%)"></div>
<svg style="left:390px;top:1751px;" width="36" height="28" viewBox="0 0 36 28"><rect x="8" y="1" width="27" height="26" fill="#fff" stroke="#8d949e" stroke-width="1.200"/>
      <rect x="10.500" y="3.500" width="22" height="10" fill="#6aa6e0"/><rect x="10.500" y="13" width="22" height="8.500" fill="#e0b64a"/>
      <path d="M10.500 12c6-3 12 2 22-2v4h-22z" fill="#f3e6b0"/><circle cx="26" cy="7.500" r="2.500" fill="#fff" opacity=".9"/>
      <path d="M1 11.500h9v-3.500l6 5.500-6 5.500v-3.500H1z" fill="#fff" stroke="#b9bec6" stroke-width=".8"/></svg>
<span style="left:431.5px;top:1752.5px;font-size:22px;line-height:25px;color:#000;letter-spacing:0.981px;">Export</span>
<svg style="left:514.5px;top:1765px;" width="10" height="5.5" viewBox="0 0 10 5.5"><path d="M0 0h10L5.0 5.5z" fill="#111"/></svg>
<div style="left:541.1px;top:1747px;width:3.8px;height:37px;background:linear-gradient(90deg,#c3c5c8 0 37%,transparent 37% 58%,#fff 58% 100%);-webkit-mask-image:linear-gradient(180deg,transparent 0,#000 22%,#000 78%,transparent 100%);mask-image:linear-gradient(180deg,transparent 0,#000 22%,#000 78%,transparent 100%)"></div>
<svg style="left:554px;top:1751px;" width="36" height="30" viewBox="0 0 36 30"><rect x="12" y="3.500" width="23" height="24.500" fill="#fdfdfd" stroke="#e4e6e9" stroke-width="1"/>
      <circle cx="11" cy="11.500" r="10" fill="#e3aaa6"/><path d="M6.500 7l9 9M15.500 7l-9 9" stroke="#fff" stroke-width="3.400"/></svg>
<div style="left:603.1px;top:1747px;width:3.8px;height:37px;background:linear-gradient(90deg,#c3c5c8 0 37%,transparent 37% 58%,#fff 58% 100%);-webkit-mask-image:linear-gradient(180deg,transparent 0,#000 22%,#000 78%,transparent 100%);mask-image:linear-gradient(180deg,transparent 0,#000 22%,#000 78%,transparent 100%)"></div>
<svg style="left:617px;top:1747px;" width="34" height="33" viewBox="0 0 34 33"><path d="M18 20 30 2" stroke="#e6b9b4" stroke-width="3.500" stroke-linecap="round"/>
      <path d="M11 14.500l12 8-7 8.500-15-5.500z" fill="#efe6c4" stroke="#e6dcb4" stroke-width="1"/>
      <path d="M13 13.500l10.500 7" stroke="#e0c9a0" stroke-width="3"/></svg>
<svg style="left:2314px;top:1749px;" width="30" height="30" viewBox="0 0 30 30"><path d="M24 7.500A12 12 0 1 0 27 15" stroke="#e3e6e9" stroke-width="2.200" fill="none"/><path d="M20 8.500h7v-7" stroke="#e3e6e9" stroke-width="2.200" fill="none"/></svg>
<div style="left:2370px;top:372px;width:1858px;height:2282px;box-sizing:border-box;border:2px solid #d7d9dc;border-radius:7px 7px 0 0;background:#fff;overflow:hidden"></div>
<div style="left:2372px;top:374px;width:1854px;height:44px;background:#e7e8ea;border-radius:5px 5px 0 0"></div>
<div style="left:2372px;top:418px;width:1854px;height:2px;background:#d7d9dc"></div>
<div style="left:2370px;top:372px;width:277px;height:49px;box-sizing:border-box;background:#f4f7f9;border:2px solid #d7d9dc;border-bottom:none;border-radius:7px 7px 0 0"></div>
<svg style="left:2389px;top:380px;" width="32" height="31" viewBox="0 0 32 31"><path d="M7 1h15l8.500 8.500V30H7z" fill="#fff" stroke="#b9bdc4" stroke-width="1.200"/>
      <path d="M22 1v8.500h8.500" fill="#eef0f3" stroke="#b9bdc4" stroke-width="1.200"/>
      <circle cx="9.500" cy="15" r="8.500" fill="#7f9fd6"/><path d="M9.500 6.500v17M1 15h17" stroke="#fff" stroke-width="1.600"/></svg>
<span style="left:2428px;top:383px;font-size:22px;line-height:25px;color:#000;letter-spacing:1.797px;">buddy-test.qmd</span>
<svg style="left:2611.0px;top:390.0px;" width="14" height="14" viewBox="0 0 14 14"><path d="M1 1 13 13M13 1 1 13" stroke="#b3b3b3" stroke-width="3.200" fill="none"/></svg>
<svg style="left:4144px;top:400px;" width="29" height="12" viewBox="0 0 29 12"><rect x="1" y="1" width="27" height="10" rx="1" fill="none" stroke="#858d93" stroke-width="2"/><rect x="1" y="1" width="27" height="5.500" rx="1" fill="#858d93"/></svg>
<svg style="left:4180px;top:387.5px;" width="29" height="24" viewBox="0 0 29 24"><path d="M8 8V3a2 2 0 0 1 2-2h16a2 2 0 0 1 2 2v11a2 2 0 0 1-2 2h-5" fill="none" stroke="#858d93" stroke-width="2"/><path d="M8 5.500V3a2 2 0 0 1 2-2h16a2 2 0 0 1 2 2v2.500z" fill="#858d93"/>
       <rect x="1" y="8" width="20" height="15" rx="2" fill="#e7e8ea" stroke="#858d93" stroke-width="2"/><path d="M1 12.500V10a2 2 0 0 1 2-2h16a2 2 0 0 1 2 2v2.500z" fill="#858d93"/></svg>
<div style="left:2372px;top:420px;width:1854px;height:42px;background:#f4f7f9"></div>
<div style="left:2372px;top:462px;width:1854px;height:2px;background:#d7d9dc"></div>
<svg style="left:2389px;top:429px;" width="32" height="27" viewBox="0 0 32 27"><path d="M1.500 13.500 13.500 1.500v7h16.500v10H13.500v7z" fill="#eeeeef" stroke="#c4c6c9" stroke-width="1.300" stroke-linejoin="round"/></svg>
<svg style="left:2424px;top:429px;" width="32" height="27" viewBox="0 0 32 27"><path d="M30.500 13.500 18.500 1.500v7H2v10h16.500v7z" fill="#f6f7f8" stroke="#dcdee0" stroke-width="1.300" stroke-linejoin="round"/></svg>
<div style="left:2468.1px;top:422px;width:3.8px;height:37px;background:linear-gradient(90deg,#c3c5c8 0 37%,transparent 37% 58%,#fff 58% 100%);-webkit-mask-image:linear-gradient(180deg,transparent 0,#000 22%,#000 78%,transparent 100%);mask-image:linear-gradient(180deg,transparent 0,#000 22%,#000 78%,transparent 100%)"></div>
<svg style="left:2484px;top:430px;" width="32" height="26" viewBox="0 0 32 26"><rect x="9" y="1.500" width="21.500" height="21" rx="3" fill="#fdfdfe" stroke="#b9bfc8" stroke-width="1.300"/>
      <path d="M9 7.500V4.500a3 3 0 0 1 3-3h15.500a3 3 0 0 1 3 3v3z" fill="#c7dcf2"/>
      <path d="M1.500 24.500 11 15M5.500 14.500H11.500V20.500" stroke="#9aa3b0" stroke-width="3" fill="none"/></svg>
<div style="left:2530.1px;top:422px;width:3.8px;height:37px;background:linear-gradient(90deg,#c3c5c8 0 37%,transparent 37% 58%,#fff 58% 100%);-webkit-mask-image:linear-gradient(180deg,transparent 0,#000 22%,#000 78%,transparent 100%);mask-image:linear-gradient(180deg,transparent 0,#000 22%,#000 78%,transparent 100%)"></div>
<svg style="left:2550px;top:430.5px;" width="25.5" height="25.5" viewBox="0 0 25.5 25.5"><g transform="translate(0,0) scale(0.9807692307692307)"><path d="M1 3a2 2 0 0 1 2-2h20a2 2 0 0 1 2 2v20a2 2 0 0 1-2 2H3a2 2 0 0 1-2-2z" fill="#cfdcee" stroke="#d5e0ef" stroke-width="1.200"/><rect x="5" y="1.500" width="16" height="10" fill="#e9eff7"/><rect x="6" y="16" width="14" height="9" fill="#e9eff7"/><rect x="8" y="18" width="4" height="7" fill="#cfdcee"/></g></svg>
<div style="left:2598.5px;top:428.5px;width:25px;height:25px;box-sizing:border-box;background:#fff;border:2px solid #9a9a9a;border-radius:6px"></div>
<span style="left:2630px;top:428.75px;font-size:22px;line-height:25px;color:#000;letter-spacing:0.346px;">Render on Save</span>
<div style="left:2812.1px;top:422px;width:3.8px;height:37px;background:linear-gradient(90deg,#c3c5c8 0 37%,transparent 37% 58%,#fff 58% 100%);-webkit-mask-image:linear-gradient(180deg,transparent 0,#000 22%,#000 78%,transparent 100%);mask-image:linear-gradient(180deg,transparent 0,#000 22%,#000 78%,transparent 100%)"></div>
<span style="left:2829px;top:425px;font-size:14.5px;line-height:16px;color:#a9a9a9;font-weight:bold;font-family:'Liberation Serif',serif;letter-spacing:1.938px;">ABC</span>
<svg style="left:2838px;top:440px;" width="18" height="16" viewBox="0 0 18 16"><path d="M1.500 8.500 6.500 14 16 1.500" stroke="#5aa13e" stroke-width="3" fill="none"/></svg>
<svg style="left:2879px;top:428px;" width="31" height="29" viewBox="0 0 31 29"><path d="M19 18 28 26.500" stroke="#a0672c" stroke-width="4.500" stroke-linecap="round"/>
      <circle cx="12" cy="11.500" r="10" fill="#d9ecf9" stroke="#8fa6bf" stroke-width="2"/><path d="M6 9a6.500 6.500 0 0 1 8-4" stroke="#fff" stroke-width="2" fill="none"/></svg>
<div style="left:2922.1px;top:422px;width:3.8px;height:37px;background:linear-gradient(90deg,#c3c5c8 0 37%,transparent 37% 58%,#fff 58% 100%);-webkit-mask-image:linear-gradient(180deg,transparent 0,#000 22%,#000 78%,transparent 100%);mask-image:linear-gradient(180deg,transparent 0,#000 22%,#000 78%,transparent 100%)"></div>
<svg style="left:2936px;top:430px;" width="30" height="25" viewBox="0 0 30 25"><g fill="#89a6d8"><rect x="0" y="6" width="7.500" height="6" rx="1.500"/><rect x="8.500" y="6" width="7.500" height="6" rx="1.500"/>
      <rect x="0" y="13" width="7.500" height="6" rx="1.500"/><rect x="8.500" y="13" width="7.500" height="6" rx="1.500"/><path d="M16.500 0 30 12.500 16.500 25z"/></g></svg>
<span style="left:2972px;top:428.75px;font-size:22px;line-height:25px;color:#000;letter-spacing:0.329px;">Render</span>
<svg style="left:3072.25px;top:426.5px;" width="30" height="30" viewBox="0 0 30 30"><circle cx="15.0" cy="15.0" r="8.80" fill="#c6c8ca" stroke="#c6c8ca" stroke-width="2.400"/><rect x="12.35" y="2.00" width="5.30" height="6.50" rx="2.20" transform="rotate(0 15.0 15.0)" fill="#c6c8ca" stroke="#c6c8ca" stroke-width="2.400"/><rect x="12.35" y="2.00" width="5.30" height="6.50" rx="2.20" transform="rotate(45 15.0 15.0)" fill="#c6c8ca" stroke="#c6c8ca" stroke-width="2.400"/><rect x="12.35" y="2.00" width="5.30" height="6.50" rx="2.20" transform="rotate(90 15.0 15.0)" fill="#c6c8ca" stroke="#c6c8ca" stroke-width="2.400"/><rect x="12.35" y="2.00" width="5.30" height="6.50" rx="2.20" transform="rotate(135 15.0 15.0)" fill="#c6c8ca" stroke="#c6c8ca" stroke-width="2.400"/><rect x="12.35" y="2.00" width="5.30" height="6.50" rx="2.20" transform="rotate(180 15.0 15.0)" fill="#c6c8ca" stroke="#c6c8ca" stroke-width="2.400"/><rect x="12.35" y="2.00" width="5.30" height="6.50" rx="2.20" transform="rotate(225 15.0 15.0)" fill="#c6c8ca" stroke="#c6c8ca" stroke-width="2.400"/><rect x="12.35" y="2.00" width="5.30" height="6.50" rx="2.20" transform="rotate(270 15.0 15.0)" fill="#c6c8ca" stroke="#c6c8ca" stroke-width="2.400"/><rect x="12.35" y="2.00" width="5.30" height="6.50" rx="2.20" transform="rotate(315 15.0 15.0)" fill="#c6c8ca" stroke="#c6c8ca" stroke-width="2.400"/><circle cx="15.0" cy="15.0" r="8.80" fill="#fff"/><rect x="12.35" y="2.00" width="5.30" height="6.50" rx="2.20" transform="rotate(0 15.0 15.0)" fill="#fff"/><rect x="12.35" y="2.00" width="5.30" height="6.50" rx="2.20" transform="rotate(45 15.0 15.0)" fill="#fff"/><rect x="12.35" y="2.00" width="5.30" height="6.50" rx="2.20" transform="rotate(90 15.0 15.0)" fill="#fff"/><rect x="12.35" y="2.00" width="5.30" height="6.50" rx="2.20" transform="rotate(135 15.0 15.0)" fill="#fff"/><rect x="12.35" y="2.00" width="5.30" height="6.50" rx="2.20" transform="rotate(180 15.0 15.0)" fill="#fff"/><rect x="12.35" y="2.00" width="5.30" height="6.50" rx="2.20" transform="rotate(225 15.0 15.0)" fill="#fff"/><rect x="12.35" y="2.00" width="5.30" height="6.50" rx="2.20" transform="rotate(270 15.0 15.0)" fill="#fff"/><rect x="12.35" y="2.00" width="5.30" height="6.50" rx="2.20" transform="rotate(315 15.0 15.0)" fill="#fff"/><circle cx="15.0" cy="15.0" r="3.40" fill="#f4f7f9" stroke="#c6c8ca" stroke-width="1.300"/></svg>
<svg style="left:3117px;top:440.6px;" width="10" height="5.5" viewBox="0 0 10 5.5"><path d="M0 0h10L5.0 5.5z" fill="#111"/></svg>
<svg style="left:3729px;top:426px;" width="38" height="30" viewBox="0 0 38 30"><rect x="13" y="4.500" width="23" height="24" rx="4" fill="#74ad6a" stroke="#5e9a55" stroke-width="1"/>
      <text x="24.500" y="24" text-anchor="middle" font-family="Liberation Serif, serif" font-weight="bold" font-size="21" fill="#fff">C</text>
      <circle cx="8.500" cy="8.500" r="7.800" fill="#fff" stroke="#d9dcdf" stroke-width="1"/><path d="M8.500 3.500v10M3.500 8.500h10" stroke="#55a03f" stroke-width="3"/></svg>
<svg style="left:3778px;top:440.75px;" width="10" height="5.5" viewBox="0 0 10 5.5"><path d="M0 0h10L5.0 5.5z" fill="#111"/></svg>
<div style="left:3796.1px;top:422px;width:3.8px;height:37px;background:linear-gradient(90deg,#c3c5c8 0 37%,transparent 37% 58%,#fff 58% 100%);-webkit-mask-image:linear-gradient(180deg,transparent 0,#000 22%,#000 78%,transparent 100%);mask-image:linear-gradient(180deg,transparent 0,#000 22%,#000 78%,transparent 100%)"></div>
<svg style="left:3817px;top:429px;" width="26" height="27" viewBox="0 0 26 27"><path d="M13 1.500 24.500 13.500h-6.500V25.500H8V13.500H1.500z" fill="#fff" stroke="#c3c5c8" stroke-width="1.300" stroke-linejoin="round"/></svg>
<svg style="left:3865px;top:430px;" width="26" height="27" viewBox="0 0 26 27"><path d="M13 25.500 24.500 13.500h-6.500V1.500H8v12H1.500z" fill="#fff" stroke="#c3c5c8" stroke-width="1.300" stroke-linejoin="round"/></svg>
<div style="left:3906.1px;top:422px;width:3.8px;height:37px;background:linear-gradient(90deg,#c3c5c8 0 37%,transparent 37% 58%,#fff 58% 100%);-webkit-mask-image:linear-gradient(180deg,transparent 0,#000 22%,#000 78%,transparent 100%);mask-image:linear-gradient(180deg,transparent 0,#000 22%,#000 78%,transparent 100%)"></div>
<svg style="left:3922px;top:429px;" width="38" height="25" viewBox="0 0 38 25"><rect x="1" y="1" width="21.500" height="22.500" rx="2.500" fill="#fff" stroke="#d3d5d8" stroke-width="1.200"/>
      <rect x="4" y="9.500" width="13" height="5" fill="#b8c7f0"/>
      <path d="M19 9h8V3.500L37.500 12 27 20.500V15h-8z" fill="#5fa45c"/></svg>
<span style="left:3964px;top:428.75px;font-size:22px;line-height:25px;color:#000;letter-spacing:0.445px;">Run</span>
<svg style="left:4018.75px;top:440.75px;" width="10" height="5.5" viewBox="0 0 10 5.5"><path d="M0 0h10L5.0 5.5z" fill="#111"/></svg>
<div style="left:4045.1px;top:422px;width:3.8px;height:37px;background:linear-gradient(90deg,#c3c5c8 0 37%,transparent 37% 58%,#fff 58% 100%);-webkit-mask-image:linear-gradient(180deg,transparent 0,#000 22%,#000 78%,transparent 100%);mask-image:linear-gradient(180deg,transparent 0,#000 22%,#000 78%,transparent 100%)"></div>
<svg style="left:4062px;top:429px;" width="34" height="26" viewBox="0 0 34 26"><g stroke="#4a8fdc" stroke-width="4.200" fill="none" stroke-linecap="butt">
      <path d="M7 11.500A10.500 10.500 0 0 1 26.500 9"/><path d="M27.500 15.500A10.500 10.500 0 0 1 8 18"/><path d="M1 11.500h8M25 15.500h8"/></g>
      <circle cx="17" cy="13.500" r="4.500" fill="#4a8fdc"/></svg>
<span style="left:4103.5px;top:428.75px;font-size:22px;line-height:25px;color:#000;letter-spacing:0.766px;">Publish</span>
<svg style="left:4199.5px;top:440.75px;" width="10" height="5.5" viewBox="0 0 10 5.5"><path d="M0 0h10L5.0 5.5z" fill="#111"/></svg>
<div style="left:2372px;top:464px;width:1854px;height:46px;background:#f4f7f9"></div>
<div style="left:2372px;top:510px;width:1854px;height:2px;background:#d7d9dc"></div>
<div style="left:2384.5px;top:470.5px;width:105px;height:33px;box-sizing:border-box;background:#ebebec;border:2px solid #c5c9cd;border-radius:4px"></div>
<span style="left:2403.5px;top:472.5px;font-size:22px;line-height:25px;color:#333;letter-spacing:-0.744px;">Source</span>
<span style="left:2510px;top:472.5px;font-size:22px;line-height:25px;color:#333;letter-spacing:0.794px;">Visual</span>
<div style="left:4088px;top:476.25px;width:22px;height:1.5px;background:#8d939b"></div>
<div style="left:4092px;top:480.25px;width:18px;height:1.5px;background:#8d939b"></div>
<div style="left:4096px;top:484.25px;width:14px;height:1.5px;background:#8d939b"></div>
<div style="left:4092px;top:488.25px;width:18px;height:1.5px;background:#8d939b"></div>
<div style="left:4096px;top:492.25px;width:14px;height:1.5px;background:#8d939b"></div>
<span style="left:4116.5px;top:473px;font-size:22px;line-height:25px;color:#333;letter-spacing:1.339px;">Outline</span>
<div style="left:2372px;top:512px;width:96px;height:2108px;background:#efeff0"></div>
<div style="left:2468px;top:1056px;width:1758px;height:102px;background:#f3f3f3"></div>
<div style="left:2468px;top:1260px;width:1758px;height:136px;background:#f3f3f3"></div>
<div style="left:3627.5px;top:512px;width:1.5px;height:2108px;background:#e6e6e6"></div>
<div style="left:2474.75px;top:546px;width:4.25px;height:34px;background:#c6c6c6"></div>
<span style="left:2427.1px;top:516.5px;font-size:25px;line-height:29px;color:#333;font-family:'Liberation Mono',monospace;letter-spacing:-.6px;">1</span>
<svg style="left:2450px;top:525px;" width="11" height="7" viewBox="0 0 11 7"><path d="M0 .5h11L5.500 6.500z" fill="#8a8a8a"/></svg>
<span style="left:2474.5px;top:516.5px;font-size:25px;line-height:29px;color:#000;font-family:'Liberation Mono',monospace;white-space:pre;letter-spacing:-.6px;-webkit-text-stroke:.3px;"><span style="color:#58616e">---</span></span>
<span style="left:2427.1px;top:550.5px;font-size:25px;line-height:29px;color:#333;font-family:'Liberation Mono',monospace;letter-spacing:-.6px;">2</span>
<span style="left:2474.5px;top:550.5px;font-size:25px;line-height:29px;color:#000;font-family:'Liberation Mono',monospace;white-space:pre;letter-spacing:-.6px;-webkit-text-stroke:.3px;"><span style="color:#0b1580">title</span><span style="color:#747c88">:</span> <span style="color:#39601e">&quot;laverty-buddy-test&quot;</span></span>
<span style="left:2427.1px;top:584.5px;font-size:25px;line-height:29px;color:#333;font-family:'Liberation Mono',monospace;letter-spacing:-.6px;">3</span>
<span style="left:2474.5px;top:584.5px;font-size:25px;line-height:29px;color:#000;font-family:'Liberation Mono',monospace;white-space:pre;letter-spacing:-.6px;-webkit-text-stroke:.3px;"><span style="color:#0b1580">author</span><span style="color:#747c88">:</span> <span style="color:#39601e">&quot;laverty&quot;</span></span>
<span style="left:2427.1px;top:618.5px;font-size:25px;line-height:29px;color:#333;font-family:'Liberation Mono',monospace;letter-spacing:-.6px;">4</span>
<span style="left:2474.5px;top:618.5px;font-size:25px;line-height:29px;color:#000;font-family:'Liberation Mono',monospace;white-space:pre;letter-spacing:-.6px;-webkit-text-stroke:.3px;"><span style="color:#0b1580">format</span><span style="color:#747c88">:</span> html</span>
<span style="left:2427.1px;top:652.5px;font-size:25px;line-height:29px;color:#333;font-family:'Liberation Mono',monospace;letter-spacing:-.6px;">5</span>
<svg style="left:2450px;top:659px;" width="11" height="7" viewBox="0 0 11 7"><path d="M0 6.500h11L5.500 .5z" fill="#8a8a8a"/></svg>
<span style="left:2474.5px;top:652.5px;font-size:25px;line-height:29px;color:#000;font-family:'Liberation Mono',monospace;white-space:pre;letter-spacing:-.6px;-webkit-text-stroke:.3px;"><span style="color:#58616e">---</span></span>
<span style="left:2427.1px;top:686.5px;font-size:25px;line-height:29px;color:#333;font-family:'Liberation Mono',monospace;letter-spacing:-.6px;">6</span>
<span style="left:2427.1px;top:720.5px;font-size:25px;line-height:29px;color:#333;font-family:'Liberation Mono',monospace;letter-spacing:-.6px;">7</span>
<svg style="left:2450px;top:729px;" width="11" height="7" viewBox="0 0 11 7"><path d="M0 .5h11L5.500 6.500z" fill="#8a8a8a"/></svg>
<span style="left:2474.5px;top:720.5px;font-size:25px;line-height:29px;color:#000;font-family:'Liberation Mono',monospace;white-space:pre;letter-spacing:-.6px;-webkit-text-stroke:.3px;"><span style="color:#0e25e6">## Quarto</span></span>
<span style="left:2427.1px;top:754.5px;font-size:25px;line-height:29px;color:#333;font-family:'Liberation Mono',monospace;letter-spacing:-.6px;">8</span>
<span style="left:2427.1px;top:788.5px;font-size:25px;line-height:29px;color:#333;font-family:'Liberation Mono',monospace;letter-spacing:-.6px;">9</span>
<span style="left:2474.5px;top:788.5px;font-size:25px;line-height:29px;color:#000;font-family:'Liberation Mono',monospace;white-space:pre;letter-spacing:-.6px;-webkit-text-stroke:.3px;">Quarto enables you to weave together content and executable code into a finished document. To learn more about Quarto see</span>
<span style="left:2474.5px;top:822.5px;font-size:25px;line-height:29px;color:#000;font-family:'Liberation Mono',monospace;white-space:pre;letter-spacing:-.6px;-webkit-text-stroke:.3px;">&lt;<span style="color:#0d1cf2;text-decoration:underline;text-decoration-color:#8f90bd;text-decoration-thickness:2px;text-underline-offset:3px;text-decoration-skip-ink:none">https://quarto.org</span>&gt;.</span>
<span style="left:2412.7px;top:856.5px;font-size:25px;line-height:29px;color:#333;font-family:'Liberation Mono',monospace;letter-spacing:-.6px;">10</span>
<span style="left:2412.7px;top:890.5px;font-size:25px;line-height:29px;color:#333;font-family:'Liberation Mono',monospace;letter-spacing:-.6px;">11</span>
<svg style="left:2450px;top:899px;" width="11" height="7" viewBox="0 0 11 7"><path d="M0 .5h11L5.500 6.500z" fill="#8a8a8a"/></svg>
<span style="left:2474.5px;top:890.5px;font-size:25px;line-height:29px;color:#000;font-family:'Liberation Mono',monospace;white-space:pre;letter-spacing:-.6px;-webkit-text-stroke:.3px;"><span style="color:#0e25e6">## Running Code</span></span>
<span style="left:2412.7px;top:924.5px;font-size:25px;line-height:29px;color:#333;font-family:'Liberation Mono',monospace;letter-spacing:-.6px;">12</span>
<span style="left:2412.7px;top:958.5px;font-size:25px;line-height:29px;color:#333;font-family:'Liberation Mono',monospace;letter-spacing:-.6px;">13</span>
<span style="left:2474.5px;top:958.5px;font-size:25px;line-height:29px;color:#000;font-family:'Liberation Mono',monospace;white-space:pre;letter-spacing:-.6px;-webkit-text-stroke:.3px;">When you click the <span style="color:#0e25e6">**Render**</span> button a document will be generated that includes both content and the output of embedded</span>
<span style="left:2474.5px;top:992.5px;font-size:25px;line-height:29px;color:#000;font-family:'Liberation Mono',monospace;white-space:pre;letter-spacing:-.6px;-webkit-text-stroke:.3px;">code. You can embed code like this:</span>
<span style="left:2412.7px;top:1026.5px;font-size:25px;line-height:29px;color:#333;font-family:'Liberation Mono',monospace;letter-spacing:-.6px;">14</span>
<span style="left:2412.7px;top:1060.5px;font-size:25px;line-height:29px;color:#333;font-family:'Liberation Mono',monospace;letter-spacing:-.6px;">15</span>
<svg style="left:2450px;top:1069px;" width="11" height="7" viewBox="0 0 11 7"><path d="M0 .5h11L5.500 6.500z" fill="#8a8a8a"/></svg>
<span style="left:2474.5px;top:1060.5px;font-size:25px;line-height:29px;color:#000;font-family:'Liberation Mono',monospace;white-space:pre;letter-spacing:-.6px;-webkit-text-stroke:.3px;"><span style="color:#343c5b">```{r}</span></span>
<span style="left:2412.7px;top:1094.5px;font-size:25px;line-height:29px;color:#333;font-family:'Liberation Mono',monospace;letter-spacing:-.6px;">16</span>
<span style="left:2474.5px;top:1094.5px;font-size:25px;line-height:29px;color:#000;font-family:'Liberation Mono',monospace;white-space:pre;letter-spacing:-.6px;-webkit-text-stroke:.3px;"><span style="color:#0b12c9">1</span> <span style="color:#5d6572">+</span> <span style="color:#0b12c9">1</span></span>
<span style="left:2412.7px;top:1128.5px;font-size:25px;line-height:29px;color:#333;font-family:'Liberation Mono',monospace;letter-spacing:-.6px;">17</span>
<svg style="left:2450px;top:1135px;" width="11" height="7" viewBox="0 0 11 7"><path d="M0 6.500h11L5.500 .5z" fill="#8a8a8a"/></svg>
<span style="left:2474.5px;top:1128.5px;font-size:25px;line-height:29px;color:#000;font-family:'Liberation Mono',monospace;white-space:pre;letter-spacing:-.6px;-webkit-text-stroke:.3px;"><span style="color:#343c5b">```</span></span>
<span style="left:2412.7px;top:1162.5px;font-size:25px;line-height:29px;color:#333;font-family:'Liberation Mono',monospace;letter-spacing:-.6px;">18</span>
<span style="left:2412.7px;top:1196.5px;font-size:25px;line-height:29px;color:#333;font-family:'Liberation Mono',monospace;letter-spacing:-.6px;">19</span>
<span style="left:2474.5px;top:1196.5px;font-size:25px;line-height:29px;color:#000;font-family:'Liberation Mono',monospace;white-space:pre;letter-spacing:-.6px;-webkit-text-stroke:.3px;">You can add options to executable code like this</span>
<span style="left:2412.7px;top:1230.5px;font-size:25px;line-height:29px;color:#333;font-family:'Liberation Mono',monospace;letter-spacing:-.6px;">20</span>
<span style="left:2412.7px;top:1264.5px;font-size:25px;line-height:29px;color:#333;font-family:'Liberation Mono',monospace;letter-spacing:-.6px;">21</span>
<svg style="left:2450px;top:1273px;" width="11" height="7" viewBox="0 0 11 7"><path d="M0 .5h11L5.500 6.500z" fill="#8a8a8a"/></svg>
<span style="left:2474.5px;top:1264.5px;font-size:25px;line-height:29px;color:#000;font-family:'Liberation Mono',monospace;white-space:pre;letter-spacing:-.6px;-webkit-text-stroke:.3px;"><span style="color:#343c5b">```{r}</span></span>
<span style="left:2412.7px;top:1298.5px;font-size:25px;line-height:29px;color:#333;font-family:'Liberation Mono',monospace;letter-spacing:-.6px;">22</span>
<span style="left:2474.5px;top:1298.5px;font-size:25px;line-height:29px;color:#000;font-family:'Liberation Mono',monospace;white-space:pre;letter-spacing:-.6px;-webkit-text-stroke:.3px;"><span style="color:#8596b8">#| </span><span style="color:#0b1580">echo</span><span style="color:#747c88">:</span> <span style="color:#5661e0">false</span></span>
<span style="left:2412.7px;top:1332.5px;font-size:25px;line-height:29px;color:#333;font-family:'Liberation Mono',monospace;letter-spacing:-.6px;">23</span>
<span style="left:2474.5px;top:1332.5px;font-size:25px;line-height:29px;color:#000;font-family:'Liberation Mono',monospace;white-space:pre;letter-spacing:-.6px;-webkit-text-stroke:.3px;"><span style="color:#0b12c9">2</span> <span style="color:#5d6572">*</span> <span style="color:#0b12c9">2</span></span>
<span style="left:2412.7px;top:1366.5px;font-size:25px;line-height:29px;color:#333;font-family:'Liberation Mono',monospace;letter-spacing:-.6px;">24</span>
<svg style="left:2450px;top:1373px;" width="11" height="7" viewBox="0 0 11 7"><path d="M0 6.500h11L5.500 .5z" fill="#8a8a8a"/></svg>
<span style="left:2474.5px;top:1366.5px;font-size:25px;line-height:29px;color:#000;font-family:'Liberation Mono',monospace;white-space:pre;letter-spacing:-.6px;-webkit-text-stroke:.3px;"><span style="color:#343c5b">```</span></span>
<span style="left:2412.7px;top:1400.5px;font-size:25px;line-height:29px;color:#333;font-family:'Liberation Mono',monospace;letter-spacing:-.6px;">25</span>
<span style="left:2412.7px;top:1434.5px;font-size:25px;line-height:29px;color:#333;font-family:'Liberation Mono',monospace;letter-spacing:-.6px;">26</span>
<span style="left:2474.5px;top:1434.5px;font-size:25px;line-height:29px;color:#000;font-family:'Liberation Mono',monospace;white-space:pre;letter-spacing:-.6px;-webkit-text-stroke:.3px;">The <span style="color:#3f4a6c">`echo: false`</span> option disables the printing of code (only output is displayed).</span>
<span style="left:2412.7px;top:1468.5px;font-size:25px;line-height:29px;color:#333;font-family:'Liberation Mono',monospace;letter-spacing:-.6px;">27</span>
<svg style="left:4080.5px;top:1058.5px;" width="29.0" height="29.0" viewBox="0 0 29.0 29.0"><circle cx="14.5" cy="14.5" r="8.46" fill="#c6c8ca" stroke="#c6c8ca" stroke-width="2.400"/><rect x="11.95" y="2.00" width="5.10" height="6.25" rx="2.12" transform="rotate(0 14.5 14.5)" fill="#c6c8ca" stroke="#c6c8ca" stroke-width="2.400"/><rect x="11.95" y="2.00" width="5.10" height="6.25" rx="2.12" transform="rotate(45 14.5 14.5)" fill="#c6c8ca" stroke="#c6c8ca" stroke-width="2.400"/><rect x="11.95" y="2.00" width="5.10" height="6.25" rx="2.12" transform="rotate(90 14.5 14.5)" fill="#c6c8ca" stroke="#c6c8ca" stroke-width="2.400"/><rect x="11.95" y="2.00" width="5.10" height="6.25" rx="2.12" transform="rotate(135 14.5 14.5)" fill="#c6c8ca" stroke="#c6c8ca" stroke-width="2.400"/><rect x="11.95" y="2.00" width="5.10" height="6.25" rx="2.12" transform="rotate(180 14.5 14.5)" fill="#c6c8ca" stroke="#c6c8ca" stroke-width="2.400"/><rect x="11.95" y="2.00" width="5.10" height="6.25" rx="2.12" transform="rotate(225 14.5 14.5)" fill="#c6c8ca" stroke="#c6c8ca" stroke-width="2.400"/><rect x="11.95" y="2.00" width="5.10" height="6.25" rx="2.12" transform="rotate(270 14.5 14.5)" fill="#c6c8ca" stroke="#c6c8ca" stroke-width="2.400"/><rect x="11.95" y="2.00" width="5.10" height="6.25" rx="2.12" transform="rotate(315 14.5 14.5)" fill="#c6c8ca" stroke="#c6c8ca" stroke-width="2.400"/><circle cx="14.5" cy="14.5" r="8.46" fill="#f8f9f9"/><rect x="11.95" y="2.00" width="5.10" height="6.25" rx="2.12" transform="rotate(0 14.5 14.5)" fill="#f8f9f9"/><rect x="11.95" y="2.00" width="5.10" height="6.25" rx="2.12" transform="rotate(45 14.5 14.5)" fill="#f8f9f9"/><rect x="11.95" y="2.00" width="5.10" height="6.25" rx="2.12" transform="rotate(90 14.5 14.5)" fill="#f8f9f9"/><rect x="11.95" y="2.00" width="5.10" height="6.25" rx="2.12" transform="rotate(135 14.5 14.5)" fill="#f8f9f9"/><rect x="11.95" y="2.00" width="5.10" height="6.25" rx="2.12" transform="rotate(180 14.5 14.5)" fill="#f8f9f9"/><rect x="11.95" y="2.00" width="5.10" height="6.25" rx="2.12" transform="rotate(225 14.5 14.5)" fill="#f8f9f9"/><rect x="11.95" y="2.00" width="5.10" height="6.25" rx="2.12" transform="rotate(270 14.5 14.5)" fill="#f8f9f9"/><rect x="11.95" y="2.00" width="5.10" height="6.25" rx="2.12" transform="rotate(315 14.5 14.5)" fill="#f8f9f9"/><circle cx="14.5" cy="14.5" r="3.27" fill="#f1f1f2" stroke="#c6c8ca" stroke-width="1.300"/></svg>
<svg style="left:4127px;top:1063.5px;" width="20" height="19" viewBox="0 0 20 19"><path d="M0 .5h20L10 10.500z" fill="#c4c5c8"/><rect x="1" y="12.500" width="18" height="6" fill="#93c78f" stroke="#7fb87c" stroke-width="1"/></svg>
<svg style="left:4176px;top:1063.5px;" width="10" height="19" viewBox="0 0 10 19"><path d="M0 .5 9.500 9.500 0 18.500z" fill="#5f9f5f"/></svg>
<svg style="left:4080.5px;top:1262.5px;" width="29.0" height="29.0" viewBox="0 0 29.0 29.0"><circle cx="14.5" cy="14.5" r="8.46" fill="#c6c8ca" stroke="#c6c8ca" stroke-width="2.400"/><rect x="11.95" y="2.00" width="5.10" height="6.25" rx="2.12" transform="rotate(0 14.5 14.5)" fill="#c6c8ca" stroke="#c6c8ca" stroke-width="2.400"/><rect x="11.95" y="2.00" width="5.10" height="6.25" rx="2.12" transform="rotate(45 14.5 14.5)" fill="#c6c8ca" stroke="#c6c8ca" stroke-width="2.400"/><rect x="11.95" y="2.00" width="5.10" height="6.25" rx="2.12" transform="rotate(90 14.5 14.5)" fill="#c6c8ca" stroke="#c6c8ca" stroke-width="2.400"/><rect x="11.95" y="2.00" width="5.10" height="6.25" rx="2.12" transform="rotate(135 14.5 14.5)" fill="#c6c8ca" stroke="#c6c8ca" stroke-width="2.400"/><rect x="11.95" y="2.00" width="5.10" height="6.25" rx="2.12" transform="rotate(180 14.5 14.5)" fill="#c6c8ca" stroke="#c6c8ca" stroke-width="2.400"/><rect x="11.95" y="2.00" width="5.10" height="6.25" rx="2.12" transform="rotate(225 14.5 14.5)" fill="#c6c8ca" stroke="#c6c8ca" stroke-width="2.400"/><rect x="11.95" y="2.00" width="5.10" height="6.25" rx="2.12" transform="rotate(270 14.5 14.5)" fill="#c6c8ca" stroke="#c6c8ca" stroke-width="2.400"/><rect x="11.95" y="2.00" width="5.10" height="6.25" rx="2.12" transform="rotate(315 14.5 14.5)" fill="#c6c8ca" stroke="#c6c8ca" stroke-width="2.400"/><circle cx="14.5" cy="14.5" r="8.46" fill="#f8f9f9"/><rect x="11.95" y="2.00" width="5.10" height="6.25" rx="2.12" transform="rotate(0 14.5 14.5)" fill="#f8f9f9"/><rect x="11.95" y="2.00" width="5.10" height="6.25" rx="2.12" transform="rotate(45 14.5 14.5)" fill="#f8f9f9"/><rect x="11.95" y="2.00" width="5.10" height="6.25" rx="2.12" transform="rotate(90 14.5 14.5)" fill="#f8f9f9"/><rect x="11.95" y="2.00" width="5.10" height="6.25" rx="2.12" transform="rotate(135 14.5 14.5)" fill="#f8f9f9"/><rect x="11.95" y="2.00" width="5.10" height="6.25" rx="2.12" transform="rotate(180 14.5 14.5)" fill="#f8f9f9"/><rect x="11.95" y="2.00" width="5.10" height="6.25" rx="2.12" transform="rotate(225 14.5 14.5)" fill="#f8f9f9"/><rect x="11.95" y="2.00" width="5.10" height="6.25" rx="2.12" transform="rotate(270 14.5 14.5)" fill="#f8f9f9"/><rect x="11.95" y="2.00" width="5.10" height="6.25" rx="2.12" transform="rotate(315 14.5 14.5)" fill="#f8f9f9"/><circle cx="14.5" cy="14.5" r="3.27" fill="#f1f1f2" stroke="#c6c8ca" stroke-width="1.300"/></svg>
<svg style="left:4127px;top:1267.5px;" width="20" height="19" viewBox="0 0 20 19"><path d="M0 .5h20L10 10.500z" fill="#c4c5c8"/><rect x="1" y="12.500" width="18" height="6" fill="#93c78f" stroke="#7fb87c" stroke-width="1"/></svg>
<svg style="left:4176px;top:1267.5px;" width="10" height="19" viewBox="0 0 10 19"><path d="M0 .5 9.500 9.500 0 18.500z" fill="#5f9f5f"/></svg>
<div style="left:2372px;top:2620px;width:1854px;height:32px;background:#f4f7f9"></div>
<div style="left:2372px;top:2620px;width:1854px;height:2px;background:#d7d9dc"></div>
<span style="left:2409px;top:2626px;font-size:21px;line-height:23px;color:#555;letter-spacing:2.898px;">2:1</span>
<div style="left:2484.5px;top:2622px;width:1.5px;height:29px;background:#d0d3d6"></div>
<svg style="left:2494px;top:2627px;" width="22" height="20" viewBox="0 0 22 20"><rect width="22" height="20" rx="3" fill="#b8903f"/><text x="11" y="16" text-anchor="middle" font-family="Liberation Sans, sans-serif" font-weight="bold" font-size="17" fill="#fff">#</text></svg>
<span style="left:2526px;top:2626px;font-size:21px;line-height:23px;color:#555;letter-spacing:2.064px;">laverty-buddy-test</span>
<svg style="left:2741px;top:2629px;" width="11" height="17" viewBox="0 0 11 17"><path d="M5.500 0 11 6H0zM5.500 17 11 11H0z" fill="#555"/></svg>
<div style="left:4106.5px;top:2622px;width:1.5px;height:29px;background:#d0d3d6"></div>
<span style="left:4118px;top:2626px;font-size:21px;line-height:23px;color:#555;letter-spacing:1.959px;">Quarto</span>
<svg style="left:4203.5px;top:2629px;" width="11" height="17" viewBox="0 0 11 17"><path d="M5.500 0 11 6H0zM5.500 17 11 11H0z" fill="#555"/></svg>
<div style="left:2370px;top:2668px;width:1858px;height:54px;box-sizing:border-box;border:2px solid #d7d9dc;border-radius:7px 7px 0 0;background:#e7e8ea"></div>
<div style="left:2370px;top:2670px;width:184px;height:50px;box-sizing:border-box;background:#ecedef;border:2px solid #d7d9dc;border-top:none;border-radius:7px 7px 0 0"></div>
<span style="left:2389px;top:2679px;font-size:22px;line-height:25px;color:#000;font-weight:bold;letter-spacing:1.003px;">Environment</span>
<div style="left:2552px;top:2670px;width:123px;height:50px;box-sizing:border-box;background:#ecedef;border:2px solid #d7d9dc;border-top:none;border-radius:7px 7px 0 0"></div>
<span style="left:2571px;top:2679px;font-size:22px;line-height:25px;color:#000;font-weight:bold;letter-spacing:1.284px;">History</span>
<div style="left:2673px;top:2670px;width:92px;height:50px;box-sizing:border-box;background:#ecedef;border:2px solid #d7d9dc;border-top:none;border-radius:7px 7px 0 0"></div>
<span style="left:2692px;top:2679px;font-size:22px;line-height:25px;color:#000;font-weight:bold;letter-spacing:0.590px;">Files</span>
<div style="left:2763px;top:2670px;width:180px;height:50px;box-sizing:border-box;background:#ecedef;border:2px solid #d7d9dc;border-top:none;border-radius:7px 7px 0 0"></div>
<span style="left:2782px;top:2679px;font-size:22px;line-height:25px;color:#000;font-weight:bold;letter-spacing:0.777px;">Connections</span>
<div style="left:2941px;top:2670px;width:145px;height:50px;box-sizing:border-box;background:#ecedef;border:2px solid #d7d9dc;border-top:none;border-radius:7px 7px 0 0"></div>
<span style="left:2960px;top:2679px;font-size:22px;line-height:25px;color:#000;font-weight:bold;letter-spacing:0.638px;">Packages</span>
<div style="left:3084px;top:2670px;width:92px;height:50px;box-sizing:border-box;background:#ecedef;border:2px solid #d7d9dc;border-top:none;border-radius:7px 7px 0 0"></div>
<span style="left:3103px;top:2679px;font-size:22px;line-height:25px;color:#000;font-weight:bold;letter-spacing:1.938px;">Help</span>
<div style="left:3174px;top:2670px;width:130px;height:50px;box-sizing:border-box;background:#ecedef;border:2px solid #d7d9dc;border-top:none;border-radius:7px 7px 0 0"></div>
<span style="left:3194px;top:2679px;font-size:22px;line-height:25px;color:#000;font-weight:bold;letter-spacing:1.567px;">Tutorial</span>
<svg style="left:4144px;top:2684px;" width="29" height="24" viewBox="0 0 29 24"><path d="M8 8V3a2 2 0 0 1 2-2h16a2 2 0 0 1 2 2v11a2 2 0 0 1-2 2h-5" fill="none" stroke="#858d93" stroke-width="2"/><path d="M8 5.500V3a2 2 0 0 1 2-2h16a2 2 0 0 1 2 2v2.500z" fill="#858d93"/>
       <rect x="1" y="8" width="20" height="15" rx="2" fill="#e7e8ea" stroke="#858d93" stroke-width="2"/><path d="M1 12.500V10a2 2 0 0 1 2-2h16a2 2 0 0 1 2 2v2.500z" fill="#858d93"/></svg>
<svg style="left:4180px;top:2684px;" width="29" height="24" viewBox="0 0 29 24"><rect x="1" y="1" width="27" height="22" rx="1" fill="none" stroke="#858d93" stroke-width="2"/><rect x="1" y="1" width="27" height="5.500" rx="1" fill="#858d93"/></svg>
</div>
<div id="edge"></div>
</body></html>
